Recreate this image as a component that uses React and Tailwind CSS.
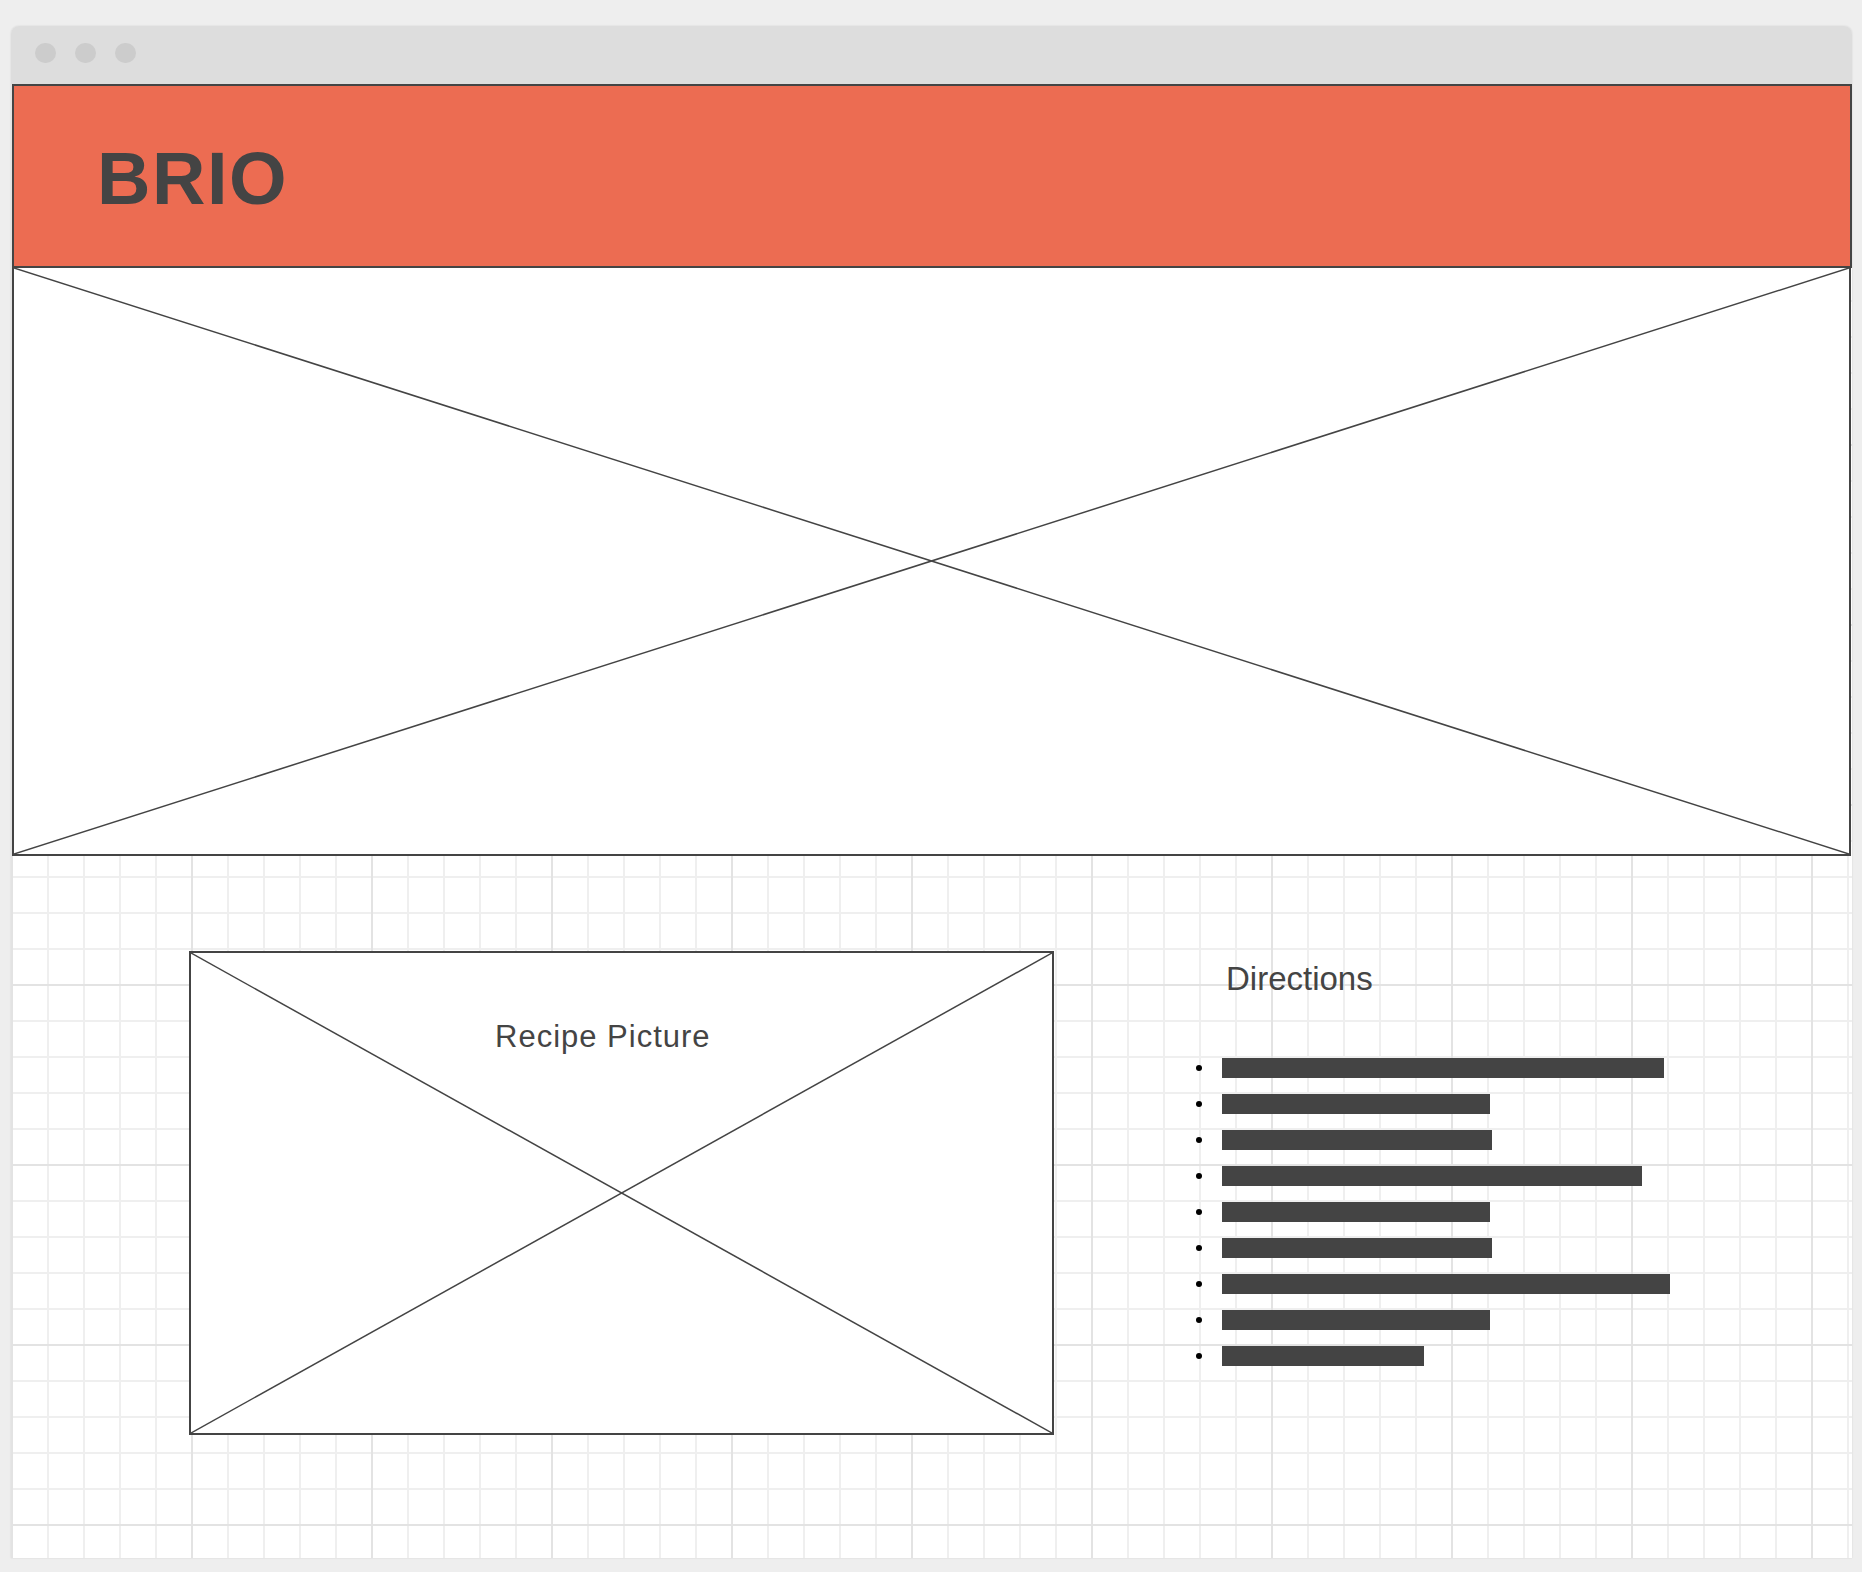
import React from 'react';

const steps = [442, 268, 270, 420, 268, 270, 448, 268, 202];

function CrossBox({ className, children }) {
  return (
    <div className={`relative bg-white ${className}`}>
      <svg className="absolute inset-0 w-full h-full" preserveAspectRatio="none" viewBox="0 0 100 100">
        <line x1="0" y1="0" x2="100" y2="100" stroke="#444444" strokeWidth="1.5" vectorEffect="non-scaling-stroke" />
        <line x1="100" y1="0" x2="0" y2="100" stroke="#444444" strokeWidth="1.5" vectorEffect="non-scaling-stroke" />
      </svg>
      {children}
    </div>
  );
}

export default function App() {
  return (
    <div className="w-full h-[1572px] bg-[#eeeeee] pt-[26px] pl-[11px] font-['Liberation_Sans',Arial,sans-serif] text-[#444444]">
      <div className="w-[1841px] h-[1532px] rounded-t-lg overflow-hidden flex flex-col shadow-[0_0_2px_rgba(0,0,0,0.12)]">
        {/* Window chrome */}
        <div className="h-[58px] shrink-0 bg-[#dddddd] flex items-center gap-[19px] pl-[24px] pb-[4px]">
          <span className="w-[21px] h-[20px] rounded-full bg-[#cccccc]"></span>
          <span className="w-[21px] h-[20px] rounded-full bg-[#cccccc]"></span>
          <span className="w-[21px] h-[20px] rounded-full bg-[#cccccc]"></span>
        </div>

        {/* Page content on grid */}
        <div className="flex-1 bg-white bg-[linear-gradient(to_right,#e3e3e3_2px,transparent_2px),linear-gradient(to_bottom,#e3e3e3_2px,transparent_2px),linear-gradient(to_right,#efefef_2px,transparent_2px),linear-gradient(to_bottom,#efefef_2px,transparent_2px)] bg-[size:180px_180px,180px_180px,36px_36px,36px_36px]">
          {/* Header */}
          <header className="h-[184px] ml-[1px] border-2 border-[#444444] bg-[#ec6c52] pl-[83px] pt-[56px]">
            <h1 className="text-[74px] leading-none font-bold tracking-[1.5px]">BRIO</h1>
          </header>

          {/* Hero placeholder */}
          <CrossBox className="h-[588px] ml-[1px] mr-[1px] border-x-2 border-b-2 border-[#444444]" />

          {/* Recipe section */}
          <div className="flex pt-[95px] pl-[178px]">
            <CrossBox className="w-[865px] h-[484px] border-2 border-[#444444]">
              <p className="relative pl-[304px] pt-[68px] text-[31px] leading-none tracking-[1px]">Recipe Picture</p>
            </CrossBox>

            <div className="ml-[142px] pt-[11px]">
              <h2 className="pl-[30px] text-[33px] leading-none">Directions</h2>
              <ul className="mt-[63px] flex flex-col gap-[16px]">
                {steps.map((w, i) => (
                  <li key={i} className="flex items-center gap-[20px] h-[20px]">
                    <span className="w-[6px] h-[6px] rounded-full bg-black"></span>
                    <span className="h-[20px] bg-[#444444]" style={{ width: w }}></span>
                  </li>
                ))}
              </ul>
            </div>
          </div>
        </div>
      </div>
    </div>
  );
}
